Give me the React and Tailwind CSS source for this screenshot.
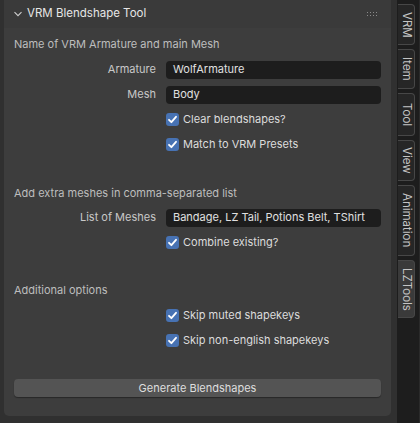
import React from 'react';

const font = { fontFamily: 'Inter, "Noto Sans", sans-serif' };

function Check({ label }) {
  return (
    <div className="flex items-center h-[25px] pl-[166px]">
      <div className="w-[13px] h-[13px] rounded-[3px] bg-[#4772b3] flex items-center justify-center">
        <svg width="11" height="11" viewBox="0 0 11 11">
          <path d="M2 5.8 L4.4 8.2 L9 2.8" fill="none" stroke="#fff" strokeWidth="1.8" strokeLinecap="round" strokeLinejoin="round" />
        </svg>
      </div>
      <span className="ml-[4px] text-[11px] text-[#dcdcdc] whitespace-nowrap">{label}</span>
    </div>
  );
}

function Field({ label, value }) {
  return (
    <div className="flex items-center h-[25px]">
      <div className="w-[156px] text-right text-[11px] text-[#c8c8c8]">{label}</div>
      <div className="ml-[10px] w-[215px] h-[18px] rounded-[4px] bg-[#1d1d1d] flex items-center px-[7px] text-[11px] text-[#e0e0e0] whitespace-nowrap overflow-hidden">
        {value}
      </div>
    </div>
  );
}

function Tab({ label, active, className = '' }) {
  return (
    <div
      className={`w-[17px] flex items-center justify-center rounded-r-[4px] border border-l-0 border-[#474747] text-[11.5px] text-[#c4c4c4] [writing-mode:vertical-rl] ${active ? 'bg-[#3a3a3a]' : 'bg-[#262626]'} ${className}`}
    >
      {label}
    </div>
  );
}

export default function App() {
  return (
    <div className="w-[420px] h-[423px] flex bg-[#303030] overflow-hidden" style={font}>
      <div className="w-[397px] pl-[4px] pr-[6px]">
        <div className="bg-[#3d3d3d] rounded-b-[5px] h-[416px] flex flex-col">
          {/* header */}
          <div className="h-[28px] flex items-center pl-[9px] pr-[14px] bg-[#3a3a3a]">
            <svg width="10" height="10" viewBox="0 0 10 10" className="mr-[4px]">
              <path d="M1.5 3.2 L5 6.7 L8.5 3.2" fill="none" stroke="#cfcfcf" strokeWidth="1.1" />
            </svg>
            <span className="text-[11.5px] text-[#e6e6e6]">VRM Blendshape Tool</span>
            <div className="ml-auto grid grid-cols-4 gap-[2px]">
              {Array.from({ length: 8 }).map((_, i) => (
                <div key={i} className="w-[1px] h-[1px] bg-[#8a8a8a]" />
              ))}
            </div>
          </div>
          <div className="pl-[10px] pt-[6px]">
            <div className="h-[20px] flex items-center text-[11px] text-[#bdbdbd]">Name of VRM Armature and main Mesh</div>
            <div className="-ml-[14px] mt-[3px]">
              <Field label="Armature" value="WolfArmature" />
              <Field label="Mesh" value="Body" />
              <Check label="Clear blendshapes?" />
              <Check label="Match to VRM Presets" />
            </div>
            <div className="h-[20px] mt-[26px] flex items-center text-[11px] text-[#bdbdbd]">Add extra meshes in comma-separated list</div>
            <div className="-ml-[14px] mt-[2px]">
              <Field label="List of Meshes" value="Bandage, LZ Tail, Potions Belt, TShirt" />
              <Check label="Combine existing?" />
            </div>
            <div className="h-[20px] mt-[25px] flex items-center text-[11px] text-[#bdbdbd]">Additional options</div>
            <div className="-ml-[14px] mt-[3px]">
              <Check label="Skip muted shapekeys" />
              <Check label="Skip non-english shapekeys" />
            </div>
            <div className="mt-[26px] mr-[10px] h-[18px] rounded-[4px] bg-[#545454] shadow-[0_1px_1px_rgba(0,0,0,0.35)] flex items-center justify-center text-[11px] text-[#dedede]">
              Generate Blendshapes
            </div>
          </div>
        </div>
      </div>
      <div className="w-[23px] bg-[#1d1d1d] flex flex-col pl-[1px] pt-[4px] gap-[4px] border-r border-[#2a2a2a]">
        <Tab label="VRM" className="h-[41px]" />
        <Tab label="Item" className="h-[40px]" />
        <Tab label="Tool" className="h-[43px]" />
        <Tab label="View" className="h-[41px]" />
        <Tab label="Animation" className="h-[71px]" />
        <Tab label="LZTools" active className="h-[58px]" />
      </div>
    </div>
  );
}
